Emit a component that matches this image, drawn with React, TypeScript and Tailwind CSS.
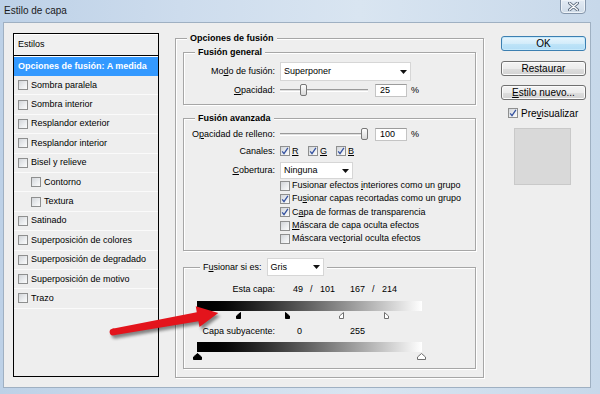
import React from 'react';

// etched group-box border, as in the classic Windows dialog
const etched = 'border border-[#a6a6a6] shadow-[inset_1px_1px_0_#ffffff,1px_1px_0_#ffffff]';

const U = ({ children }: { children: React.ReactNode }) => (
  <span className="underline decoration-1 underline-offset-[1px]">{children}</span>
);

function Checkbox({ checked = false }: { checked?: boolean }) {
  return (
    <span className="flex h-[10px] w-[10px] shrink-0 items-center justify-center border border-[#8e8f8f] bg-[linear-gradient(135deg,#d2d5d9_0%,#eceef0_60%,#fbfbfb_100%)]">
      {checked && (
        <svg width="8" height="8" viewBox="0 0 8 8">
          <path d="M1.2 4.3 L3 6.6 L6.9 0.9" fill="none" stroke="#3552a0" strokeWidth="1.3" />
        </svg>
      )}
    </span>
  );
}

function Select({ value, className }: { value: string; className: string }) {
  return (
    <div className={`flex items-center justify-between border border-[#d6d6d6] bg-white pl-[3px] pr-[3px] ${className}`}>
      <span>{value}</span>
      <svg width="7" height="4" viewBox="0 0 7 4">
        <path d="M0 0H7L3.5 4Z" fill="#111" />
      </svg>
    </div>
  );
}

function Slider({ value }: { value: number }) {
  const left = (value / 100) * 81;
  return (
    <div className="relative h-[13px] w-[88px] shrink-0">
      <div className="absolute left-0 right-0 top-[5px] h-[3px] border-t border-b border-t-[#9a9a9a] border-b-white bg-[#e0e0e0]" />
      <div
        className="absolute top-0 h-[12px] w-[7px] rounded-[2px] border border-[#777777] bg-[linear-gradient(180deg,#fdfdfd,#d9d9d9)]"
        style={{ left }}
      />
    </div>
  );
}

function NumInput({ value }: { value: string }) {
  return (
    <div className="ml-[7px] flex h-[13px] w-[32px] items-center border border-[#c4c4c4] border-t-[#9c9c9c] bg-white pl-[4px]">
      {value}
    </div>
  );
}

function Row({ label, children, className = '' }: { label: React.ReactNode; children: React.ReactNode; className?: string }) {
  return (
    <div className={`flex items-center ${className}`}>
      <div className="w-[91px] shrink-0 text-right">{label}</div>
      <div className="ml-[5px] flex items-center">{children}</div>
    </div>
  );
}

type Mark = { v: number; kind: 'full' | 'left' | 'right'; white?: boolean };

const markPath = {
  full: 'M4.5 0.5 L8.5 4 V6.5 H0.5 V4 Z',
  left: 'M4.5 0.5 V6.5 H0.5 V4 Z',
  right: 'M4.5 0.5 L8.5 4 V6.5 H4.5 Z',
};

function LevelBar({ marks }: { marks: Mark[] }) {
  return (
    <div className="ml-[13px] w-[225px]">
      <div className="h-[10px] bg-gradient-to-r from-black to-white" />
      <div className="relative h-[8px]">
        {marks.map((m, i) => (
          <svg
            key={i}
            width="9"
            height="7"
            viewBox="0 0 9 7"
            className="absolute top-[1px]"
            style={{ left: (m.v / 255) * 224 - 4.5 }}
          >
            <path d={markPath[m.kind]} fill={m.white ? '#ffffff' : '#000000'} stroke={m.white ? '#6f6f6f' : '#000000'} strokeWidth="1" />
          </svg>
        ))}
      </div>
    </div>
  );
}

const styles: { name: string; sub?: boolean }[] = [
  { name: 'Sombra paralela' },
  { name: 'Sombra interior' },
  { name: 'Resplandor exterior' },
  { name: 'Resplandor interior' },
  { name: 'Bisel y relieve' },
  { name: 'Contorno', sub: true },
  { name: 'Textura', sub: true },
  { name: 'Satinado' },
  { name: 'Superposición de colores' },
  { name: 'Superposición de degradado' },
  { name: 'Superposición de motivo' },
  { name: 'Trazo' },
];

function StyleList() {
  return (
    <div className="flex h-[344px] w-[146px] shrink-0 flex-col border border-black">
      <div className="flex h-[22px] items-center border-b border-black bg-[#f0f0f0] pl-[4px] shadow-[inset_1px_1px_0_#ffffff]">
        Estilos
      </div>
      <div className="flex h-[20px] items-center border-t border-white bg-[#3399ff] pl-[4px] font-bold text-white">
        Opciones de fusión: A medida
      </div>
      {styles.map((s) => (
        <div
          key={s.name}
          className={`flex h-[19.4px] items-center gap-[3px] border-b border-[#fafafa] ${s.sub ? 'pl-[17px]' : 'pl-[4px]'}`}
        >
          <Checkbox />
          <span>{s.name}</span>
        </div>
      ))}
    </div>
  );
}

const blendChecks: { label: React.ReactNode; checked: boolean }[] = [
  { label: <>Fusionar efectos <U>i</U>nteriores como un grupo</>, checked: false },
  { label: <>Fu<U>s</U>ionar capas recortadas como un grupo</>, checked: true },
  { label: <>C<U>a</U>pa de formas de transparencia</>, checked: true },
  { label: <><U>M</U>áscara de capa oculta efectos</>, checked: false },
  { label: <>Máscara vec<U>t</U>orial oculta efectos</>, checked: false },
];

function BlendOptions() {
  return (
    <fieldset className={`ml-[16px] h-[345px] w-[309px] shrink-0 ${etched}`}>
      <legend className="ml-[11px] bg-[#eeeeee] px-[3px] font-bold leading-[11px]">Opciones de fusión</legend>
      <div className="px-[7px] pt-[3px]">
        {/* Fusión general */}
        <fieldset className={`h-[58px] ${etched}`}>
          <legend className="ml-[11px] bg-[#eeeeee] px-[3px] font-bold leading-[11px]">Fusión general</legend>
          <div className="pt-[4px]">
            <Row label={<>Mo<U>d</U>o de fusión:</>}>
              <Select value="Superponer" className="h-[19px] w-[131px]" />
            </Row>
            <Row className="mt-[3px] h-[13px]" label={<><U>O</U>pacidad:</>}>
              <Slider value={25} />
              <NumInput value="25" />
              <span className="ml-[4px]">%</span>
            </Row>
          </div>
        </fieldset>

        {/* Fusión avanzada */}
        <fieldset className={`mt-[8px] h-[138px] ${etched}`}>
          <legend className="ml-[11px] bg-[#eeeeee] px-[3px] font-bold leading-[11px]">Fusión avanzada</legend>
          <div className="pt-[4px]">
            <Row className="h-[13px]" label={<>O<U>p</U>acidad de relleno:</>}>
              <Slider value={100} />
              <NumInput value="100" />
              <span className="ml-[4px]">%</span>
            </Row>
            <Row className="mt-[5px] h-[10px]" label="Canales:">
              {['R', 'G', 'B'].map((c) => (
                <span key={c} className="flex w-[28px] items-center gap-[2px]">
                  <Checkbox checked />
                  <U>{c}</U>
                </span>
              ))}
            </Row>
            <Row className="mt-[6px]" label={<><U>C</U>obertura:</>}>
              <Select value="Ninguna" className="h-[17px] w-[73px]" />
            </Row>
            <div className="pl-[96px]">
              {blendChecks.map((b, i) => (
                <div key={i} className="flex h-[13.3px] items-center gap-[2px]">
                  <Checkbox checked={b.checked} />
                  <span>{b.label}</span>
                </div>
              ))}
            </div>
          </div>
        </fieldset>

        {/* Fusionar si es */}
        <fieldset className={`mt-[7px] h-[111px] ${etched}`}>
          <legend className="ml-[16px] bg-[#eeeeee] px-[3px]">
            <div className="flex items-center gap-[5px]">
              <span>F<U>u</U>sionar si es:</span>
              <Select value="Gris" className="h-[18px] w-[57px]" />
            </div>
          </legend>
          <div className="flex h-[12px] items-center pt-0 mt-[7px]">
            <div className="w-[91px] shrink-0 text-right">Esta capa:</div>
            <div className="ml-[18px] flex">
              <span className="w-[17px]">49</span>
              <span className="w-[10px]">/</span>
              <span className="w-[30px]">101</span>
              <span className="w-[22px]">167</span>
              <span className="w-[10px]">/</span>
              <span>214</span>
            </div>
          </div>
          <div className="mt-[6px]">
            <LevelBar
              marks={[
                { v: 49, kind: 'left' },
                { v: 101, kind: 'right' },
                { v: 167, kind: 'left', white: true },
                { v: 214, kind: 'right', white: true },
              ]}
            />
          </div>
          <div className="mt-[6px] flex h-[12px] items-center">
            <div className="w-[91px] shrink-0 text-right">Capa subyacente:</div>
            <div className="ml-[22px] flex">
              <span className="w-[53px]">0</span>
              <span>255</span>
            </div>
          </div>
          <div className="mt-[5px]">
            <LevelBar
              marks={[
                { v: 0, kind: 'full' },
                { v: 255, kind: 'full', white: true },
              ]}
            />
          </div>
        </fieldset>
      </div>
    </fieldset>
  );
}

function SideButtons() {
  const plain =
    'flex h-[15px] w-full items-center justify-center rounded-[3px] border border-[#707070] bg-[linear-gradient(180deg,#f4f4f4_0%,#ececec_50%,#dedede_51%,#d2d2d2_100%)] text-[10px] leading-none shadow-[inset_0_0_0_1px_#fbfbfb]';
  return (
    <div className="ml-[17px] mt-[3px] flex w-[85px] shrink-0 flex-col text-[10px]">
      <button className="flex h-[15px] w-full items-center justify-center rounded-[3px] border border-[#3c7fb1] bg-[linear-gradient(180deg,#e8f5fd_0%,#d3ecfa_50%,#bfe4f8_51%,#b2ddf6_100%)] text-[10px] leading-none shadow-[inset_0_0_0_1px_#c6e9fb]">
        OK
      </button>
      <button className={`mt-[10px] ${plain}`}>Restaurar</button>
      <button className={`mt-[9px] ${plain}`}>
        <span>
          <U>E</U>stilo nuevo...
        </span>
      </button>
      <div className="ml-[7px] mt-[8px] flex h-[10px] items-center gap-[3px]">
        <Checkbox checked />
        <span>
          Pre<U>v</U>isualizar
        </span>
      </div>
      <div className="ml-[13px] mt-[10px] h-[57px] w-[57px] border border-[#c9c9c9] bg-[#d9d9d9]" />
    </div>
  );
}

function CloseButton() {
  return (
    <div className="-mt-[1px] flex h-[15px] w-[26px] items-center justify-center rounded-b-[4px] border border-[#8596ab] bg-[linear-gradient(180deg,#e3ebf4,#cfdbe8)] shadow-[inset_0_0_0_1px_#eef3f8]">
      <svg width="11" height="9" viewBox="0 0 11 9">
        <path d="M1.5 1 L9.5 8 M9.5 1 L1.5 8" stroke="#5f6e80" strokeWidth="3" strokeLinecap="round" />
        <path d="M1.5 1 L9.5 8 M9.5 1 L1.5 8" stroke="#ffffff" strokeWidth="1.2" strokeLinecap="round" />
      </svg>
    </div>
  );
}

function RedArrow() {
  const shape = 'M0 -3.4 L86 -4.6 L86 -10.5 L107 0 L86 10.5 L86 4.6 L0 3.4 Z';
  return (
    <svg width="600" height="394" className="pointer-events-none absolute left-0 top-0">
      <defs>
        <filter id="blur" x="-20%" y="-50%" width="140%" height="200%">
          <feGaussianBlur stdDeviation="1.6" />
        </filter>
      </defs>
      <g transform="translate(115 335) rotate(-10.25)" opacity="0.45" filter="url(#blur)">
        <path d={shape} fill="#000" />
        <circle r="3.4" fill="#000" />
      </g>
      <g transform="translate(113 332) rotate(-10.25)">
        <path d={shape} fill="#e3141c" />
        <circle r="3.4" fill="#e3141c" />
      </g>
    </svg>
  );
}

export default function App() {
  return (
    <div className="relative h-[394px] w-[600px] overflow-hidden bg-[linear-gradient(90deg,#bdd1e7_0%,#cddced_30%,#d9e5f1_60%,#c7d8ea_100%)] font-['Liberation_Sans',Arial,sans-serif] text-black">
      <div className="flex h-[22px] items-start justify-between pl-[4px] pr-[14px]">
        <span className="mt-[5px] text-[10px] leading-[12px] text-[#1a1a1a]">Estilo de capa</span>
        <CloseButton />
      </div>
      <div className="ml-[3px] flex h-[366px] w-[588px] items-start border border-[#9fb0c2] bg-[#eeeeee] pl-[9px] pt-[10px] text-[9px] leading-[11px]">
        <StyleList />
        <BlendOptions />
        <SideButtons />
      </div>
      <RedArrow />
    </div>
  );
}
